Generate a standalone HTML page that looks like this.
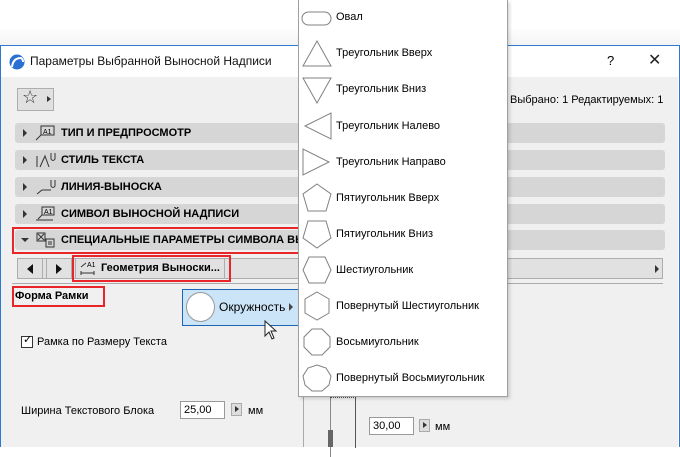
<!DOCTYPE html>
<html><head><meta charset="utf-8"><style>
*{margin:0;padding:0;box-sizing:border-box}
body{width:680px;height:447px;overflow:hidden;background:#fff;font-family:"Liberation Sans",sans-serif;font-size:11px;color:#000;position:relative}
.a{position:absolute}
.bar{position:absolute;left:15px;width:650px;height:20px;background:#d6d6d6;border-radius:3px}
.bar .t{position:absolute;left:46px;top:4px;font-weight:bold;font-size:11px}
.bar .tri{position:absolute;left:8px;top:6px;width:0;height:0;border-left:4px solid #333;border-top:4px solid transparent;border-bottom:4px solid transparent}
.red{position:absolute;border:2px solid #e8262a}
.mi{position:absolute;left:336px;font-size:11px}
</style></head><body>
<div class="a" style="left:0;top:0;width:680px;height:46px;background:linear-gradient(#fff,#fff 60%,#f3f3f3)"></div>
<div class="a" style="left:0;top:45px;width:680px;height:402px;border:1px solid #2b79d0;border-bottom:none;background:#fff"></div>
<div class="a" style="left:1px;top:77px;width:677px;height:370px;background:#f0f0f0"></div>
<svg class="a" style="left:9px;top:54px" width="16" height="16"><circle cx="8" cy="8" r="7.5" fill="#2a6fd3"/><path d="M3 13 Q4 4 12 4 Q14 5 14 8" stroke="#fff" stroke-width="2" fill="none"/></svg>
<div class="a" style="left:30px;top:54px;font-size:12px;color:#111">Параметры Выбранной Выносной Надписи</div>
<div class="a" style="left:607px;top:53px;font-size:13px">?</div>
<div class="a" style="left:648px;top:50px;font-size:16px;color:#222">✕</div>
<div class="a" style="left:17px;top:88px;width:37px;height:23px;border:1px solid #adadad;background:#e1e1e1"></div>
<div class="a" style="left:22px;top:87px;font-size:18px;color:#333">☆</div>
<div class="a" style="left:47px;top:96px;border-left:4px solid #333;border-top:3px solid transparent;border-bottom:3px solid transparent"></div>
<div class="a" style="left:510px;top:94px;font-size:11px">Выбрано: 1 Редактируемых: 1</div>
<div class="bar" style="top:123px"><div class="tri"></div><svg class="a" style="left:20px;top:2px" width="22" height="16"><rect x="6" y="1" width="13" height="9" fill="none" stroke="#333"/><text x="8" y="9" font-size="7" font-family="Liberation Sans">A1</text><path d="M6 10 L1 15" stroke="#333"/></svg><div class="t">ТИП И ПРЕДПРОСМОТР</div></div>
<div class="bar" style="top:150px"><div class="tri"></div><svg class="a" style="left:20px;top:2px" width="22" height="16"><path d="M2 4 V15 M5 15 L10 4 L14 15 M16 1 V7 Q18 10 20 7 V1" stroke="#333" fill="none"/></svg><div class="t">СТИЛЬ ТЕКСТА</div></div>
<div class="bar" style="top:177px"><div class="tri"></div><svg class="a" style="left:20px;top:2px" width="22" height="16"><path d="M2 15 L7 11 H16 M16 1 V7 Q18 10 20 7 V1" stroke="#333" fill="none"/></svg><div class="t">ЛИНИЯ-ВЫНОСКА</div></div>
<div class="bar" style="top:204px"><div class="tri"></div><svg class="a" style="left:20px;top:2px" width="22" height="16"><rect x="7" y="1" width="12" height="8" fill="none" stroke="#333"/><text x="9" y="8" font-size="7" font-family="Liberation Sans">A1</text><path d="M7 9 L3 13 M1 14 H18" stroke="#333"/></svg><div class="t">СИМВОЛ ВЫНОСНОЙ НАДПИСИ</div></div>
<div class="bar" style="top:230px"><div class="a" style="left:6px;top:8px;border-top:4px solid #333;border-left:4px solid transparent;border-right:4px solid transparent"></div><svg class="a" style="left:20px;top:2px" width="22" height="16"><rect x="2" y="1" width="8" height="8" fill="none" stroke="#333"/><path d="M3 2 L9 8 M9 2 L3 8" stroke="#333"/><rect x="11" y="7" width="8" height="8" fill="none" stroke="#333"/><path d="M13 10 H17 M13 12 H17" stroke="#333"/></svg><div class="t">СПЕЦИАЛЬНЫЕ ПАРАМЕТРЫ СИМВОЛА ВЫ</div></div>
<div class="red" style="left:12px;top:227px;width:289px;height:27px"></div>
<div class="a" style="left:17px;top:258px;width:646px;height:21px;border:1px solid #adadad;background:#e1e1e1"></div>
<div class="a" style="left:17px;top:258px;width:26px;height:21px;border:1px solid #adadad;background:#e1e1e1"></div>
<div class="a" style="left:27px;top:264px;border-right:6px solid #111;border-top:5px solid transparent;border-bottom:5px solid transparent"></div>
<div class="a" style="left:46px;top:258px;width:26px;height:21px;border:1px solid #adadad;background:#e1e1e1"></div>
<div class="a" style="left:56px;top:264px;border-left:6px solid #111;border-top:5px solid transparent;border-bottom:5px solid transparent"></div>
<div class="a" style="left:75px;top:258px;width:150px;height:21px;border:1px solid #adadad;background:#e1e1e1"></div>
<svg class="a" style="left:80px;top:260px" width="18" height="16"><text x="7" y="7" font-size="7" font-family="Liberation Sans">A1</text><path d="M1 7 L6 3 M1 13 H14 M1 11 V15 M14 11 V15" stroke="#333" fill="none"/></svg>
<div class="a" style="left:101px;top:262px;font-weight:bold">Геометрия Выноски...</div>
<div class="red" style="left:72px;top:255px;width:159px;height:27px"></div>
<div class="a" style="left:655px;top:265px;border-left:4px solid #333;border-top:4px solid transparent;border-bottom:4px solid transparent"></div>
<div class="a" style="left:12px;top:283px;width:651px;height:1px;background:#aaa"></div>
<div class="a" style="left:15px;top:290px;font-weight:bold">Форма Рамки</div>
<div class="red" style="left:12px;top:286px;width:93px;height:21px"></div>
<div class="a" style="left:182px;top:289px;width:117px;height:37px;background:#cce4f7;border:1px solid #1e64b4"></div>
<div class="a" style="left:186px;top:292px;width:29px;height:30px;border:1px solid #999;border-radius:50%;background:#fff"></div>
<div class="a" style="left:219px;top:300px;font-size:12px">Окружность</div>
<div class="a" style="left:289px;top:303px;border-left:4px solid #444;border-top:4px solid transparent;border-bottom:4px solid transparent"></div>
<svg class="a" style="left:264px;top:320px" width="14" height="20"><path d="M1 1 V16 L5 12 L8 19 L10 18 L7 11 L12 11 Z" fill="#fff" stroke="#222"/></svg>
<div class="a" style="left:21px;top:336px;width:12px;height:12px;border:1px solid #333;background:#fff"></div>
<div class="a" style="left:23px;top:333px;font-size:11px">✓</div>
<div class="a" style="left:37px;top:336px;font-size:11px">Рамка по Размеру Текста</div>
<div class="a" style="left:21px;top:405px;font-size:11px">Ширина Текстового Блока</div>
<div class="a" style="left:180px;top:401px;width:45px;height:18px;border:1px solid #999;background:#fff;padding:2px 3px">25,00</div>
<div class="a" style="left:231px;top:403px;width:11px;height:13px;border:1px solid #aaa;background:#ddd"></div>
<div class="a" style="left:235px;top:406px;border-left:4px solid #333;border-top:3px solid transparent;border-bottom:3px solid transparent"></div>
<div class="a" style="left:248px;top:405px">мм</div>
<div class="a" style="left:303px;top:397px;width:1px;height:50px;background:#aaa"></div>
<div class="a" style="left:330px;top:397px;width:1px;height:60px;background:#888"></div>
<div class="a" style="left:328px;top:430px;width:5px;height:17px;background:#666"></div>
<div class="a" style="left:355px;top:398px;width:1px;height:50px;background:#555"></div>
<div class="a" style="left:330px;top:397px;width:26px;border-top:1px dotted #555"></div>
<div class="a" style="left:369px;top:417px;width:45px;height:18px;border:1px solid #999;background:#fff;padding:2px 3px">30,00</div>
<div class="a" style="left:419px;top:419px;width:11px;height:13px;border:1px solid #aaa;background:#ddd"></div>
<div class="a" style="left:423px;top:422px;border-left:4px solid #333;border-top:3px solid transparent;border-bottom:3px solid transparent"></div>
<div class="a" style="left:435px;top:421px">мм</div>
<div class="a" style="left:298px;top:0;width:210px;height:397px;background:#fff;border:1px solid #a0a0a0;border-top:none;box-shadow:2px 2px 3px rgba(0,0,0,.15)"></div>
<svg class="a" style="left:298px;top:0" width="40" height="397" fill="none" stroke="#808080">
<rect x="4" y="12" width="29" height="13" rx="6.5"/>
<path d="M19 41 L33 66 L5 66 Z"/>
<path d="M5 78 L33 78 L19 103 Z"/>
<path d="M33 113 L33 139 L7 126 Z"/>
<path d="M5 149 L5 175 L31 162 Z"/>
<path d="M19 184 L33 194 L28 211 L10 211 L5 194 Z"/>
<path d="M10 221 L28 221 L33 238 L19 248 L5 238 Z"/>
<path d="M11 257 L27 257 L33 270 L27 283 L11 283 L5 270 Z"/>
<path d="M19 292 L31 299 L31 313 L19 320 L7 313 L7 299 Z"/>
<path d="M14 329 L24 329 L32 337 L32 347 L24 355 L14 355 L6 347 L6 337 Z"/>
<path d="M19 365 L28 368 L33 376 L31 385 L24 391 L14 391 L7 385 L5 376 L10 368 Z"/>
</svg>
<div class="mi" style="top:11px">Овал</div>
<div class="mi" style="top:47px">Треугольник Вверх</div>
<div class="mi" style="top:83px">Треугольник Вниз</div>
<div class="mi" style="top:120px">Треугольник Налево</div>
<div class="mi" style="top:156px">Треугольник Направо</div>
<div class="mi" style="top:192px">Пятиугольник Вверх</div>
<div class="mi" style="top:228px">Пятиугольник Вниз</div>
<div class="mi" style="top:264px">Шестиугольник</div>
<div class="mi" style="top:300px">Повернутый Шестиугольник</div>
<div class="mi" style="top:336px">Восьмиугольник</div>
<div class="mi" style="top:372px">Повернутый Восьмиугольник</div>
</body></html>
